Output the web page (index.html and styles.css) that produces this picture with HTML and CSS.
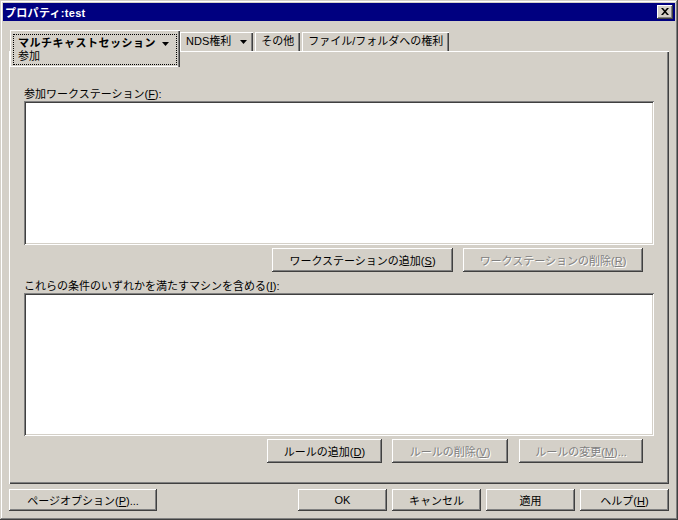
FILE: index.html
```html
<!DOCTYPE html>
<html>
<head>
   <title>プロパティ:test</title>
<link rel="stylesheet" href="styles.css"></head>
<body>
<div class="window">
<div class="titlebar">
<span class="title">プロパティ:test</span>
<button type="button" class="close"><svg width="8" height="7" viewBox="0 0 8 7"><path d="M0 0h2l2 2.2L6 0h2L5 3.5 8 7H6L4 4.8 2 7H0l3-3.5z" fill="#000"/></svg></button>
</div>

<div class="tabs">
<div class="tab active">
<div class="focus">
<div class="tabhead"><b>マルチキャストセッション</b><svg class="arrow" width="7" height="4" viewBox="0 0 7 4"><path d="M0 0h7L3.5 4z" fill="#000"/></svg></div>
<div>参加</div>
</div>
</div>
<div class="tab">NDS権利<svg class="arrow" width="7" height="4" viewBox="0 0 7 4"><path d="M0 0h7L3.5 4z" fill="#000"/></svg></div>
<div class="tab">その他</div>
<div class="tab">ファイル/フォルダへの権利</div>
</div>

<div class="panel">
<div class="label">参加ワークステーション(<u>F</u>):</div>
<div class="listbox list1"></div>
<div class="btnrow">
<button type="button" class="button" style="width:181px">ワークステーションの追加(<u>S</u>)</button>
<button type="button" class="button disabled" style="width:180px">ワークステーションの削除(<u>R</u>)</button>
</div>
<div class="label label2">これらの条件のいずれかを満たすマシンを含める(<u>I</u>):</div>
<div class="listbox list2"></div>
<div class="btnrow">
<button type="button" class="button" style="width:115px">ルールの追加(<u>D</u>)</button>
<button type="button" class="button disabled" style="width:116px">ルールの削除(<u>V</u>)</button>
<button type="button" class="button disabled" style="width:124px;margin-left:1px">ルールの変更(<u>M</u>)...</button>
</div>
</div>

<div class="footer">
<button type="button" class="button small" style="width:148px">ページオプション(<u>P</u>)...</button>
<div class="footright">
<button type="button" class="button small">OK</button>
<button type="button" class="button small">キャンセル</button>
<button type="button" class="button small">適用</button>
<button type="button" class="button small">ヘルプ(<u>H</u>)</button>
</div>
</div>
</div>
</body>
</html>
```

FILE: styles.css
```css
body{margin:0;font-family:"Liberation Sans","Noto Sans CJK JP",sans-serif;font-size:11px;color:#000;}
.window{
width:678px;height:520px;box-sizing:border-box;padding:3px;
background:#d4d0c8;
box-shadow:inset -1px -1px #404040,inset 1px 1px #d4d0c8,inset -2px -2px #808080,inset 2px 2px #fff;
display:flex;flex-direction:column;
}
.titlebar{height:18px;background:#000080;display:flex;align-items:center;justify-content:space-between;padding:0 2px 0 2px;}
.title{color:#fff;font-weight:bold;font-size:11px;letter-spacing:0.3px;}
.close{
width:16px;height:14px;padding:0;border:0;background:#d4d0c8;
box-shadow:inset -1px -1px #404040,inset 1px 1px #fff,inset -2px -2px #808080;
display:flex;align-items:center;justify-content:center;
}
.close svg{display:block;margin:0 1px 1px 0;}

.tabs{display:flex;align-items:flex-start;height:21px;margin:9px 0 0 7px;position:relative;z-index:1;}
.tab{
height:19px;margin-top:2px;padding:0 6px 0 6px;box-sizing:border-box;
background:#d4d0c8;
box-shadow:inset 1px 1px #fff,inset -1px 0 #404040,inset -2px 0 #808080;
display:flex;align-items:center;line-height:13px;margin-right:2px;
}
.tab .arrow{margin-left:9px;}
.tab.active{
width:170px;height:37px;margin-top:0;padding:4px 3px 2px 3px;margin-right:0;
box-shadow:inset 1px 1px #fff,inset -1px 0 #404040,inset -2px 0 #808080,inset 0 -1px #fff;
align-items:stretch;
}
.focus{flex:1;border:1px dotted #000;padding:2px 0 0 4px;line-height:13px;}
.tabhead{display:flex;align-items:center;}
.tabhead b{letter-spacing:0.5px;}
.tabhead .arrow{margin-left:6px;}

.panel{
height:433px;margin:0 6px;box-sizing:border-box;padding:36px 15px 0 15px;
box-shadow:inset 1px 1px #fff,inset -1px -1px #404040,inset -2px -2px #808080;
display:flex;flex-direction:column;
}
.label{height:14px;line-height:14px;}
.label2{margin-top:7px;}
.listbox{
background:#fff;
box-shadow:inset 1px 1px #808080,inset -1px -1px #fff,inset 2px 2px #404040,inset -2px -2px #d4d0c8;
}
.list1{height:144px;}
.list2{height:143px;}
.btnrow{display:flex;justify-content:flex-end;gap:10px;margin:3px 11px 0 0;}

.button{
height:24px;padding:0;border:0;background:#d4d0c8;
font-family:inherit;font-size:11px;color:#000;
box-shadow:inset -1px -1px #404040,inset 1px 1px #fff,inset -2px -2px #808080;
}
.button.disabled{color:#808080;text-shadow:1px 1px 0 #fff;}
.button.small{height:22px;width:89px;}
.footer{display:flex;justify-content:space-between;margin:5px 6px 0 6px;}
.footright{display:flex;gap:5px;}
```
